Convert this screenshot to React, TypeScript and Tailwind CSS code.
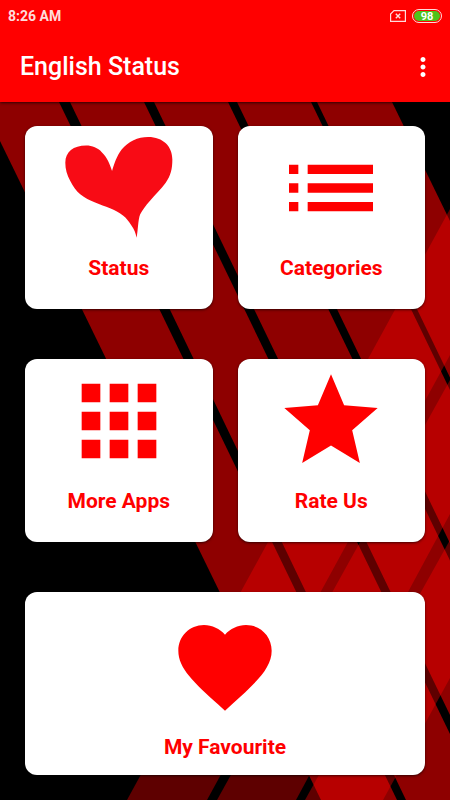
import React from 'react';
import { MdApps, MdFavorite, MdList, MdMoreVert, MdStar } from 'react-icons/md';

interface MenuCardProps {
    label: string;
    icon: React.ReactNode;
    wide?: boolean;
}

const StatusHeart: React.FC = () => (
    <svg viewBox="0 0 338 338" className="size-28 text-[#f80b15]" fill="currentColor" aria-hidden="true">
        <path d="M148 118C155 94 162 73 177 53C197 28 226 15 257 15C302 15 330 43 330 83C330 112 325 132 310 153C296 173 277 190 262 208C250 222 240 234 233 248C226 266 227 292 222 319C219 304 215 295 207 283C199 271 192 261 182 253C170 243 156 236 142 230C127 224 112 220 97 213C80 206 66 199 52 188C39 177 30 164 22 148C12 130 7 112 7 93C7 60 31 41 70 41C88 41 105 48 117 61C133 77 141 95 148 118Z" />
    </svg>
);

const Backdrop: React.FC = () => (
    <svg
        viewBox="0 0 450 800"
        preserveAspectRatio="xMidYMid slice"
        className="absolute inset-0 size-full"
        fill="#ff0000"
        aria-hidden="true"
    >
        {/* Bands falling to the right */}
        <g fillOpacity={0.556}>
            <path d="M-19 102H59L397 800H321Z" />
            <path d="M70 102H144L482 800H406Z" />
            <path d="M154 102H228L566 800H491Z" />
            <path d="M237 102H311L648 800H574Z" />
            <path d="M317 102H392L732 800H654Z" />
        </g>
        {/* Bands rising to the right */}
        <g fillOpacity={0.37}>
            <path d="M450 209V355L207 800H127Z" />
            <path d="M450 380V514L296 800H217Z" />
            <path d="M450 540V678L383 800H305Z" />
        </g>
    </svg>
);

const MenuCard: React.FC<MenuCardProps> = ({ label, icon, wide }) => (
    <button
        type="button"
        className={`flex flex-col items-center gap-3 rounded-xl bg-white text-[#ff0000] shadow-sm shadow-black/50 ${
            wide ? 'col-span-2 pt-[19px] pb-4' : 'pt-1.5 pb-[29px]'
        }`}
    >
        {icon}
        <span className="text-[21px] leading-6 font-bold">{label}</span>
    </button>
);

const StatusBar: React.FC = () => (
    <div className="flex h-8 items-center justify-between px-2 text-[#ffdcdc]">
        <span className="text-sm font-bold">8:26 AM</span>
        <div className="flex items-center gap-1.5">
            <svg viewBox="0 0 16 12" className="h-3 w-4" fill="none" stroke="currentColor" aria-hidden="true">
                <path d="M4 .6H15.4V11.4H.6V4Z" strokeWidth="1.2" />
                <path d="M5.8 3.8L10.2 8.2M10.2 3.8L5.8 8.2" strokeWidth="1.4" />
            </svg>
            <div className="flex h-3.5 w-[30px] rounded-full border border-current p-px">
                <span className="flex flex-1 items-center justify-center rounded-full bg-[#4fc31a] text-[11px] leading-none font-bold text-white">
                    98
                </span>
            </div>
        </div>
    </div>
);

const App: React.FC = () => {
    return (
        <div className="relative min-h-screen bg-black font-[Roboto,sans-serif]">
            <Backdrop />

            <header className="relative bg-[#ff0000] shadow-sm shadow-black/50">
                <StatusBar />
                <div className="flex h-[70px] items-center justify-between pr-3 pl-5 text-white">
                    <h1 className="text-[25px] leading-8 font-medium">English Status</h1>
                    <button type="button" aria-label="More options">
                        <MdMoreVert size={30} />
                    </button>
                </div>
            </header>

            <main className="relative grid grid-cols-2 gap-x-[25px] gap-y-[50px] px-[25px] pt-6 pb-[25px]">
                <MenuCard label="Status" icon={<StatusHeart />} />
                <MenuCard label="Categories" icon={<MdList className="size-28" />} />
                <MenuCard label="More Apps" icon={<MdApps className="size-28" />} />
                <MenuCard label="Rate Us" icon={<MdStar className="size-28" />} />
                <MenuCard label="My Favourite" icon={<MdFavorite className="size-28" />} wide />
            </main>
        </div>
    );
};

export default App;
